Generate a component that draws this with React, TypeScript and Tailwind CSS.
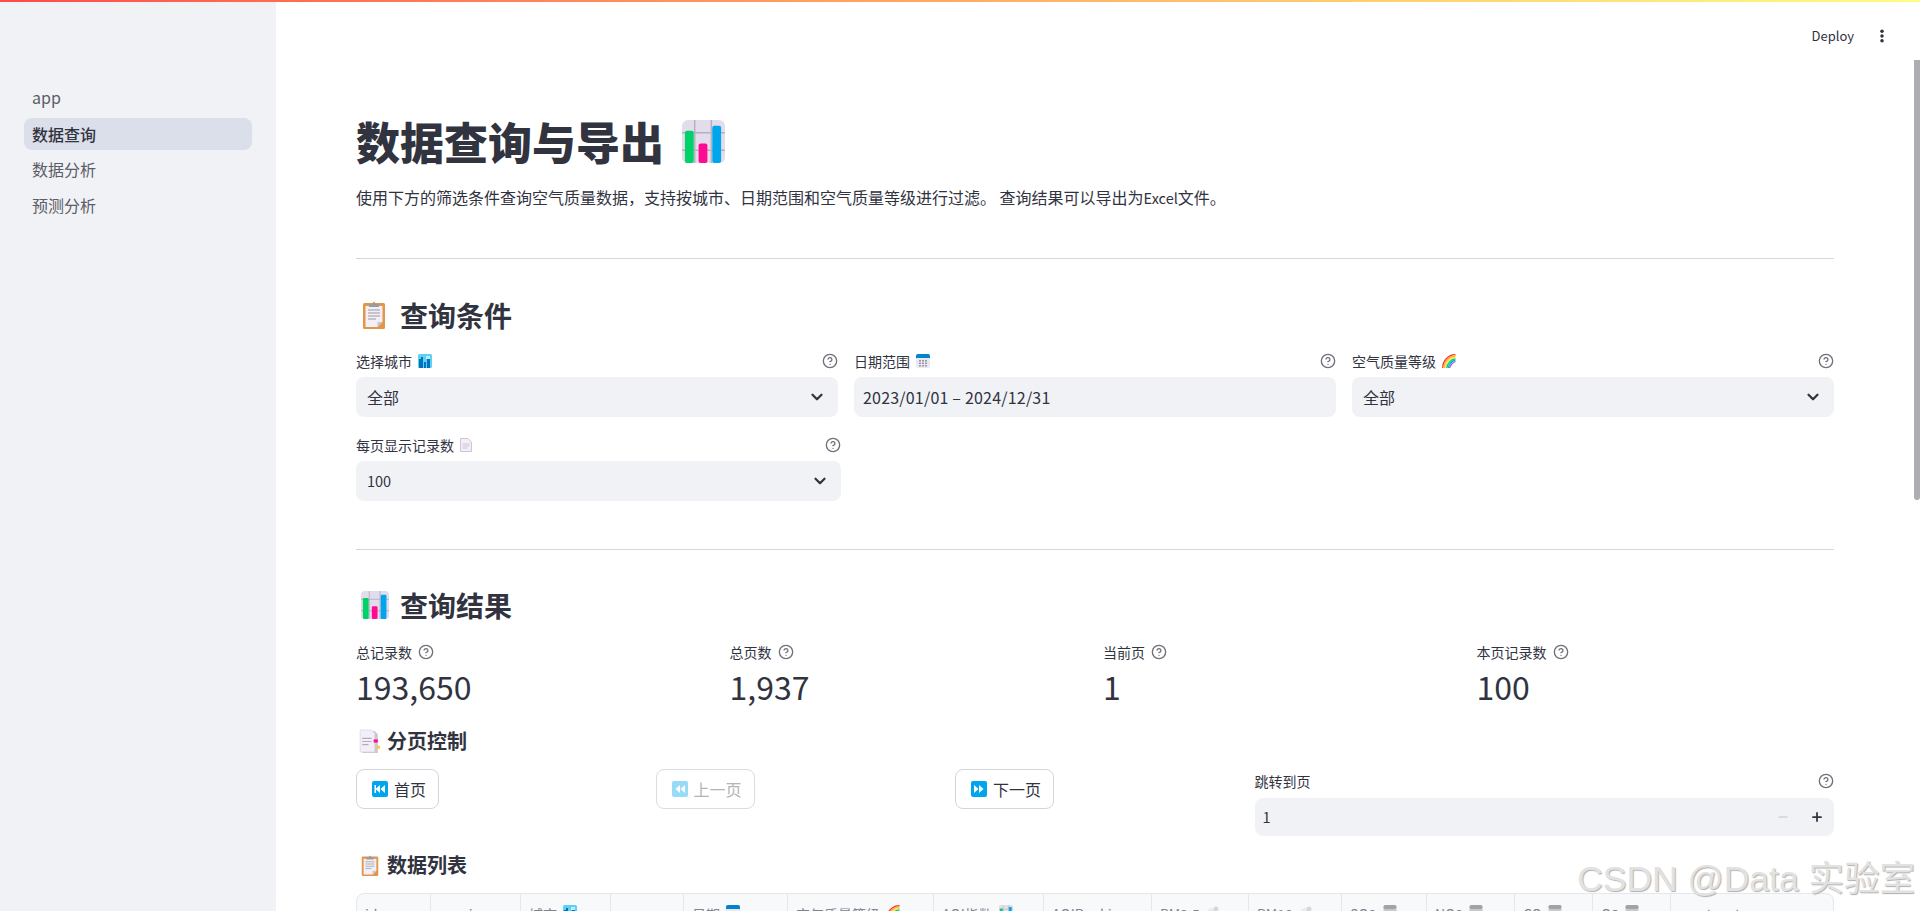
import { ChevronDown, CircleHelp, Minus, Plus } from 'lucide-react';

const font = { fontFamily: '"Noto Sans CJK SC", sans-serif' };

function ChartEmoji({ className }: { className: string }) {
  return (
    <svg viewBox="0 0 44 44" className={className}>
      <rect width="44" height="44" rx="6" fill="#e2dcec" />
      <path d="M0 13h44M0 31h44M13 0v44M30 0v44" stroke="#b5b0bd" strokeWidth="1.500" />
      <rect x="3" y="11" width="9" height="33" rx="2" fill="#00d26a" />
      <rect x="17" y="24" width="9" height="20" rx="2" fill="#ff0a93" />
      <rect x="31" y="6" width="9" height="38" rx="2" fill="#00a6ed" />
    </svg>
  );
}

function ClipboardEmoji({ className }: { className: string }) {
  return (
    <svg viewBox="0 0 24 28" className={className}>
      <rect x="1" y="2" width="22" height="26" rx="1.500" fill="#e19747" />
      <path d="M3.500 5h17v16l-5 5h-12z" fill="#f3eef8" />
      <path d="M20.500 21h-5v5z" fill="#cac3d2" />
      <path d="M6 9h12M6 12h12M6 15h12M6 18h8" stroke="#9b9b9b" strokeWidth="1" />
      <path d="M7 6V3h3l2-2.500L14 3h3v3z" fill="#9b9b9b" />
    </svg>
  );
}

function CityEmoji() {
  return (
    <svg viewBox="0 0 14 14" className="h-[14px] w-[14px]">
      <rect width="14" height="14" rx="1.500" fill="#5ed0f5" />
      <path d="M1 14V5h2V3h2v11zM6 14V8h2v6zM9 14V5h3v9z" fill="#0074ba" />
      <path d="M8 2h4v3H8z" fill="#bfeaff" />
    </svg>
  );
}

function CalendarEmoji() {
  return (
    <svg viewBox="0 0 14 14" className="h-[14px] w-[14px]">
      <rect width="14" height="14" rx="2" fill="#ece8f2" />
      <path d="M0 4V2a2 2 0 0 1 2-2h10a2 2 0 0 1 2 2v2z" fill="#0084ce" />
      <path d="M3 6h2v1.500H3zM6 6h2v1.500H6zM9 6h2v1.500H9zM3 8.500h2V10H3zM6 8.500h2V10H6zM9 8.500h2V10H9zM3 11h2v1.500H3zM6 11h2v1.500H6zM9 11h2v1.500H9z" fill="#9b96a6" />
    </svg>
  );
}

function RainbowEmoji() {
  return (
    <svg viewBox="0 0 14 14" className="h-[14px] w-[14px]" fill="none" strokeWidth="1.300">
      <path d="M.7 14C.7 7 6 .7 13.500.7" stroke="#f8312f" />
      <path d="M2.100 14C2.100 8 7 2 13.500 2" stroke="#ffb02e" />
      <path d="M3.500 14C3.500 9 8 3.400 13.500 3.400" stroke="#ffe135" />
      <path d="M4.900 14C4.900 10 9 4.800 13.500 4.800" stroke="#00d26a" />
      <path d="M6.300 14C6.300 11 10 6.200 13.500 6.200" stroke="#00a6ed" />
      <path d="M7.700 14C7.700 12 11 7.600 13.500 7.600" stroke="#8d65c5" />
    </svg>
  );
}

function PageEmoji() {
  return (
    <svg viewBox="0 0 12 14" className="h-[14px] w-[12px]">
      <path d="M.5.5h7.500l3.500 3.500v9.500H.5z" fill="#f3eef8" stroke="#cdc4d6" />
      <path d="M2.500 6h7M2.500 8h7M2.500 10h5" stroke="#cdc4d6" />
    </svg>
  );
}

function TabsEmoji() {
  return (
    <svg viewBox="0 0 20 24" className="h-[25px] w-[21px]">
      <path d="M3 2h12l3 3v18H3z" fill="#cdc4d6" />
      <path d="M1 1h11l3 3v18H1z" fill="#f3eef8" stroke="#dcd5e4" strokeWidth=".7" />
      <path d="M3 9h9M3 12h9M3 15h6" stroke="#b4acbc" />
      <rect x="14" y="10" width="4" height="3" fill="#ff0a93" />
      <rect x="17" y="16" width="3" height="3" fill="#ffc83d" />
    </svg>
  );
}

function GasEmoji() {
  return (
    <svg viewBox="0 0 14 14" className="h-[14px] w-[14px]">
      <rect x=".5" y="0" width="13" height="14" rx="2" fill="#c9c9c9" />
      <rect x=".5" y="0" width="13" height="4" rx="2" fill="#a3a3a3" />
    </svg>
  );
}

function DotEmoji() {
  return (
    <svg viewBox="0 0 14 14" className="h-[14px] w-[14px]">
      <circle cx="6" cy="8" r="5" fill="#ececec" />
      <circle cx="10" cy="4" r="2.500" fill="#d8d8d8" />
    </svg>
  );
}

function SkipIcon({ dir, bar, faded }: { dir: 'left' | 'right'; bar?: boolean; faded?: boolean }) {
  return (
    <svg viewBox="0 0 16 16" className={faded ? 'h-4 w-4 opacity-40' : 'h-4 w-4'}>
      <rect width="16" height="16" rx="2" fill="#00a6ed" />
      {dir === 'left' ? (
        <path d="M8 4v8L3.500 8zM13 4v8L8.500 8z" fill="#fff" />
      ) : (
        <path d="M3 4v8l4.500-4zM8 4v8l4.500-4z" fill="#fff" />
      )}
      {bar && <rect x="2.500" y="4" width="1.500" height="8" fill="#fff" />}
    </svg>
  );
}

function Help() {
  return <CircleHelp className="h-4 w-4 text-[#6f7079]" strokeWidth={2} />;
}

function Label({ text, icon, help = true }: { text: string; icon?: React.ReactNode; help?: boolean }) {
  return (
    <div className="flex h-5 items-center justify-between text-[14px] leading-5 text-[#31333f]">
      <span className="flex items-center gap-[6px]">
        {text}
        {icon}
      </span>
      {help && <Help />}
    </div>
  );
}

function Select({ value, small }: { value: string; small?: boolean }) {
  return (
    <div className="mt-[6px] flex h-10 items-center justify-between rounded-lg bg-[#f0f2f6] pr-3 pl-[11px] text-[#31333f]">
      <span className={small ? 'text-[14.500px]' : 'text-[16px]'}>{value}</span>
      <ChevronDown className="h-[18px] w-[18px]" strokeWidth={3} />
    </div>
  );
}

function Metric({ label, value }: { label: string; value: string }) {
  return (
    <div>
      <div className="flex h-5 items-center gap-[6px] text-[14px] text-[#31333f]">
        {label}
        <Help />
      </div>
      <div className="mt-[2px] h-[45px] text-[32px] leading-[44px] text-[#31333f]">{value}</div>
    </div>
  );
}

function Button({ label, dir, bar, faded }: { label: string; dir: 'left' | 'right'; bar?: boolean; faded?: boolean }) {
  return (
    <div
      className={
        faded
          ? 'flex h-10 w-fit items-center gap-[6px] rounded-lg border border-[#dcdde1] bg-white pr-3 pl-[15px] text-[16px] text-[#b3b3b8]'
          : 'flex h-10 w-fit items-center gap-[6px] rounded-lg border border-[#d5d6da] bg-white pr-3 pl-[15px] text-[16px] text-[#31333f]'
      }
    >
      <SkipIcon dir={dir} bar={bar} faded={faded} />
      {label}
    </div>
  );
}

const columns: { name: string; width: string; icon?: React.ReactNode }[] = [
  { name: 'id', width: 'w-[74px]' },
  { name: 'province', width: 'w-[90px]' },
  { name: '城市', width: 'w-[90px]', icon: <CityEmoji /> },
  { name: 'year', width: 'w-[73px]' },
  { name: '日期', width: 'w-[104px]', icon: <CalendarEmoji /> },
  { name: '空气质量等级', width: 'w-[146px]', icon: <RainbowEmoji /> },
  { name: 'AQI指数', width: 'w-[110px]', icon: <ChartEmoji className="h-[14px] w-[14px]" /> },
  { name: 'AQIRanking', width: 'w-[108px]' },
  { name: 'PM2.5', width: 'w-[97px]', icon: <DotEmoji /> },
  { name: 'PM10', width: 'w-[93px]', icon: <DotEmoji /> },
  { name: 'SO2', width: 'w-[85px]', icon: <GasEmoji /> },
  { name: 'NO2', width: 'w-[88px]', icon: <GasEmoji /> },
  { name: 'CO', width: 'w-[78px]', icon: <GasEmoji /> },
  { name: 'O3', width: 'w-[78px]', icon: <GasEmoji /> },
  { name: 'create_at', width: 'flex-1' },
];

export default function App() {
  return (
    <div className="relative h-[911px] overflow-hidden bg-white" style={font}>
      <div className="h-[2px] bg-gradient-to-r from-[#ff4b4b] to-[#fffd80]" />
      <div className="flex h-[909px]">
        <aside className="w-[276px] shrink-0 bg-[#f0f2f6] px-6 pt-[80px] text-[16px] text-[#5c5d68]">
          <div className="flex flex-col gap-1">
            <div className="flex h-8 items-center px-2 pb-[2px]">app</div>
            <div className="flex h-8 items-center rounded-lg bg-[#dbdfe9] px-2 pb-px font-medium text-[#31333f]">数据查询</div>
            <div className="flex h-8 items-center px-2 pb-[2px]">数据分析</div>
            <div className="flex h-8 items-center px-2 pb-[2px]">预测分析</div>
          </div>
        </aside>

        <main className="min-w-0 flex-1 pr-[86px] pl-[80px] text-[#31333f]">
          <div className="-mr-[86px] flex h-[60px] items-start justify-end gap-[25px] pt-[25px] pr-[35px]">
            <span className="text-[13px] leading-[18px]">Deploy</span>
            <svg viewBox="0 0 6 16" className="mt-[2px] h-[14px] w-[6px]" fill="#31333f">
              <circle cx="3" cy="2.500" r="2" />
              <circle cx="3" cy="8" r="2" />
              <circle cx="3" cy="13.500" r="2" />
            </svg>
          </div>

          <h1 className="mt-[49px] flex h-[60px] items-center gap-[18px] text-[44px] leading-[60px] font-black">
            数据查询与导出
            <ChartEmoji className="h-[43px] w-[43px]" />
          </h1>
          <p className="mt-[14px] h-6 text-[16px] leading-6">
            使用下方的筛选条件查询空气质量数据，支持按城市、日期范围和空气质量等级进行过滤。 查询结果可以导出为<span className="text-[14.500px]">Excel</span>文件。
          </p>

          <div className="mt-[49px] h-px bg-[#d5d6da]" />

          <h2 className="mt-[36px] flex h-10 items-center gap-[14px] pl-[6px] text-[28px] leading-10 font-bold">
            <ClipboardEmoji className="h-7 w-6" />
            查询条件
          </h2>

          <div className="mt-4 grid grid-cols-3 gap-4">
            <div>
              <Label text="选择城市" icon={<CityEmoji />} />
              <Select value="全部" />
            </div>
            <div>
              <Label text="日期范围" icon={<CalendarEmoji />} />
              <div className="mt-[6px] flex h-10 items-center rounded-lg bg-[#f0f2f6] px-[9px] text-[16px] tracking-[.2px]">
                2023/01/01 – 2024/12/31
              </div>
            </div>
            <div>
              <Label text="空气质量等级" icon={<RainbowEmoji />} />
              <Select value="全部" />
            </div>
          </div>

          <div className="mt-[18px] w-[485px]">
            <Label text="每页显示记录数" icon={<PageEmoji />} />
            <Select value="100" small />
          </div>

          <div className="mt-[48px] h-px bg-[#d5d6da]" />

          <h2 className="mt-[35px] flex h-10 items-center gap-[11px] pl-[5px] text-[28px] leading-10 font-bold">
            <ChartEmoji className="h-7 w-7" />
            查询结果
          </h2>

          <div className="mt-[17px] grid grid-cols-4 gap-4">
            <Metric label="总记录数" value="193,650" />
            <Metric label="总页数" value="1,937" />
            <Metric label="当前页" value="1" />
            <Metric label="本页记录数" value="100" />
          </div>

          <h3 className="mt-[17px] flex h-[30px] items-center gap-[7px] pl-[3px] text-[20px] leading-[30px] font-bold">
            <TabsEmoji />
            分页控制
          </h3>

          <div className="mt-[13px] grid grid-cols-[283.5px_283.5px_283.5px_1fr] gap-4">
            <Button label="首页" dir="left" bar />
            <Button label="上一页" dir="left" faded />
            <Button label="下一页" dir="right" />
            <div className="pt-[2px]">
              <Label text="跳转到页" />
              <div className="mt-[7px] flex h-[38px] items-center justify-between rounded-lg bg-[#f0f2f6] pr-[10px] pl-2 text-[14.500px]">
                1
                <span className="flex items-center gap-[20px]">
                  <Minus className="h-[14px] w-[14px] text-[#d0d3da]" strokeWidth={2.5} />
                  <Plus className="h-[14px] w-[14px] text-[#31333f]" strokeWidth={3} />
                </span>
              </div>
            </div>
          </div>

          <h3 className="mt-[14px] flex h-[30px] items-center gap-2 pl-[5px] text-[20px] leading-[30px] font-bold">
            <ClipboardEmoji className="h-[21px] w-[18px]" />
            数据列表
          </h3>

          <div className="mt-[13px] flex h-[42px] rounded-t-lg border border-[#e6e7ea] bg-[#f8f9fb] text-[14px] text-[#808495]">
            {columns.map((c) => (
              <div key={c.name} className={`${c.width} flex items-center gap-[6px] border-r border-[#e6e7ea] px-2 last:border-r-0`}>
                {c.name}
                {c.icon && <span className="-mt-1">{c.icon}</span>}
              </div>
            ))}
          </div>
        </main>
      </div>

      <div className="absolute top-[60px] right-0 h-[440px] w-[6px] rounded-b bg-[#aeaeb2]" />
      <div
        className="absolute top-[857px] right-[5px] text-[35.500px] leading-[44px] text-[#e2e2e2] [text-shadow:1px_1px_1px_#b0b0b0]"
        style={{ fontFamily: '"Liberation Sans", "Noto Sans CJK SC", sans-serif' }}
      >
        CSDN @Data 实验室
      </div>
    </div>
  );
}
